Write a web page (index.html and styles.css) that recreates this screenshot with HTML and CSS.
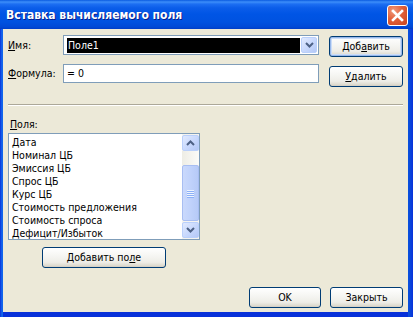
FILE: index.html
```html
<!DOCTYPE html>
<html lang="ru">
<head>
    <meta charset="UTF-8">
    <title>Вставка вычисляемого поля</title>
    <link rel="stylesheet" href="styles.css">
</head>
<body>
    <!-- Dialog window -->
    <div class="window">
        <div class="titlebar">
            <span class="title">Вставка вычисляемого поля</span>
            <button class="close-button" aria-label="Закрыть">
                <svg width="13" height="13" viewBox="0 0 13 13">
                    <path d="M2 2 L11 11 M11 2 L2 11" stroke="#fff" stroke-width="2.6" stroke-linecap="square"/>
                </svg>
            </button>
        </div>

        <div class="client">
            <!-- Name -->
            <div class="field-row">
                <label class="field-label"><u>И</u>мя:</label>
                <div class="combo">
                    <div class="combo-text"><span class="selected">Поле1</span></div>
                    <div class="combo-arrow">
                        <svg width="9" height="6" viewBox="0 0 9 6">
                            <path d="M1 1 L4.5 4.5 L8 1" fill="none" stroke="#4D6185" stroke-width="2"/>
                        </svg>
                    </div>
                </div>
                <button class="btn btn-side btn-default">Доб<u>а</u>вить</button>
            </div>

            <!-- Formula -->
            <div class="field-row formula-row">
                <label class="field-label"><u>Ф</u>ормула:</label>
                <div class="text-input">= 0</div>
                <button class="btn btn-side btn-low"><u>У</u>далить</button>
            </div>

            <div class="separator"></div>

            <!-- Fields list -->
            <div class="fields-label"><u>П</u>оля:</div>
            <div class="listbox">
                <ul class="list-items">
                    <li>Дата</li>
                    <li>Номинал ЦБ</li>
                    <li>Эмиссия ЦБ</li>
                    <li>Спрос ЦБ</li>
                    <li>Курс ЦБ</li>
                    <li>Стоимость предложения</li>
                    <li>Стоимость спроса</li>
                    <li>Дефицит/Избыток</li>
                </ul>
                <div class="scrollbar">
                    <div class="scroll-button">
                        <svg width="9" height="6" viewBox="0 0 9 6">
                            <path d="M1 5 L4.5 1.5 L8 5" fill="none" stroke="#4D6185" stroke-width="2"/>
                        </svg>
                    </div>
                    <div class="scroll-track-top"></div>
                    <div class="scroll-thumb">
                        <span></span><span></span><span></span><span></span>
                    </div>
                    <div class="scroll-button">
                        <svg width="9" height="6" viewBox="0 0 9 6">
                            <path d="M1 1 L4.5 4.5 L8 1" fill="none" stroke="#4D6185" stroke-width="2"/>
                        </svg>
                    </div>
                </div>
            </div>
            <button class="btn btn-add-field">Добавить по<u>л</u>е</button>

            <!-- Footer -->
            <div class="dialog-footer">
                <button class="btn btn-side">OK</button>
                <button class="btn btn-side">Закрыть</button>
            </div>
        </div>
    </div>
</body>
</html>
```

FILE: styles.css
```css
/* General */
* {
    margin: 0;
    padding: 0;
    box-sizing: border-box;
}

body {
    background: #ECE9D8;
    font-family: "DejaVu Sans Condensed", "Liberation Sans", sans-serif;
    font-size: 10.5px;
    color: #000;
}

u {
    text-decoration: underline;
    text-underline-offset: 1px;
}

/* Window frame */
.window {
    width: 413px;
    height: 317px;
    display: flex;
    flex-direction: column;
    background: linear-gradient(90deg, #0831D9 0, #166AEE 2px, #0055E5 4px, #0055E5 406px, #0A4EDB 409px, #0831D9 413px);
}

.titlebar {
    height: 29px;
    display: flex;
    align-items: center;
    justify-content: space-between;
    padding: 0 5px 0 6px;
    background: linear-gradient(180deg, #0A5BE0 0, #3D8EF9 2px, #1D6FF2 4px, #0B5DE9 8px, #0055E5 14px, #0052E0 22px, #0049D6 27px, #003DC7 29px);
}

.title {
    color: #fff;
    font-family: "DejaVu Sans Condensed", "DejaVu Sans", sans-serif;
    font-weight: bold;
    font-size: 12px;
    text-shadow: 1px 1px 0 #0A1E8A;
    margin-top: 1px;
}

.close-button {
    width: 21px;
    height: 21px;
    border: 1px solid #fff;
    border-radius: 3px;
    background: radial-gradient(circle at 30% 25%, #F09A7C 0, #E2603A 45%, #C7431D 100%);
    display: flex;
    align-items: center;
    justify-content: center;
    margin-top: 1px;
}

.client {
    flex: 1;
    margin: 0 5px 0 3px;
    background: #ECE9D8;
    padding: 6px 5px 4px 4px;
    display: flex;
    flex-direction: column;
    border-bottom: 5px solid #0831D9;
}

/* Rows with label, field and button */
.field-row {
    display: flex;
    align-items: flex-start;
    height: 22px;
}

.formula-row {
    margin-top: 7px;
    height: 24px;
}

.field-label {
    width: 56px;
    line-height: 20px;
    padding-left: 1px;
}

.formula-row .field-label {
    line-height: 19px;
}

.combo {
    width: 256px;
    height: 20px;
    border: 1px solid #7F9DB9;
    background: #fff;
    display: flex;
    align-items: center;
    padding: 1px 1px 1px 3px;
}

.combo-text {
    flex: 1;
    height: 15px;
    background: #000;
    margin-right: 1px;
}

.selected {
    color: #fff;
    line-height: 15px;
    padding-left: 1px;
}

.combo-arrow {
    width: 16px;
    height: 16px;
    border-radius: 2px;
    border: 1px solid #BAD0FB;
    background: linear-gradient(135deg, #E1EAFE 0, #C9D9FD 50%, #B4C8F6 100%);
    display: flex;
    align-items: center;
    justify-content: center;
}

.text-input {
    width: 256px;
    height: 19px;
    border: 1px solid #7F9DB9;
    background: #fff;
    line-height: 17px;
    padding-left: 3px;
}

/* XP buttons */
.btn {
    height: 21px;
    border: 1px solid #003C74;
    border-radius: 3px;
    background: linear-gradient(180deg, #FFFFFF 0, #F6F6F3 40%, #EEEDE7 75%, #DEDBD0 92%, #D2CCC0 100%);
    font-family: inherit;
    font-size: 10.5px;
    color: #000;
    line-height: 19px;
    text-align: center;
}

.btn-side {
    width: 74px;
    margin-left: auto;
    margin-top: 1px;
}

.btn-low {
    margin-top: 2px;
}

.btn-default {
    box-shadow: inset 0 0 0 1px #98B8EA, inset 0 0 0 2px #CBDDF8;
}

.separator {
    margin: 16px 0 0 1px;
    border-top: 1px solid #ACA899;
    border-bottom: 1px solid #fff;
}

.fields-label {
    margin: 12px 0 0 3px;
    line-height: 13px;
}

/* List box */
.listbox {
    width: 192px;
    height: 107px;
    margin: 2px 0 0 1px;
    border: 1px solid #7F9DB9;
    background: #fff;
    display: flex;
}

.list-items {
    flex: 1;
    list-style: none;
    padding: 2px 0 0 3px;
    line-height: 13px;
    overflow: hidden;
}

.scrollbar {
    width: 17px;
    display: flex;
    flex-direction: column;
    background: #F5F4EF;
    padding-top: 1px;
}

.scroll-button {
    height: 16px;
    border: 1px solid #BAD0FB;
    border-radius: 2px;
    background: linear-gradient(135deg, #E1EAFE 0, #C9D9FD 50%, #B4C8F6 100%);
    display: flex;
    align-items: center;
    justify-content: center;
}

.scroll-track-top {
    height: 14px;
    background: linear-gradient(90deg, #EEEDE5, #FBFBF8);
}

.scroll-thumb {
    height: 56px;
    border: 1px solid #A8BEF2;
    border-radius: 2px;
    background: linear-gradient(90deg, #CAD9FC 0, #C0D2FB 50%, #B6CAF7 100%);
    display: flex;
    flex-direction: column;
    align-items: center;
    justify-content: center;
    gap: 1px;
    margin-bottom: 1px;
}

.scroll-thumb span {
    width: 7px;
    height: 1px;
    background: #EEF4FE;
    box-shadow: 0 1px 0 #8CB0F8;
}

.btn-add-field {
    width: 124px;
    margin: 7px 0 0 35px;
}

.dialog-footer {
    margin-top: auto;
    display: flex;
    justify-content: flex-end;
    gap: 9px;
}

.dialog-footer .btn-side {
    width: 72px;
    margin-left: 0;
}

.dialog-footer .btn-side:last-child {
    width: 73px;
}
```
